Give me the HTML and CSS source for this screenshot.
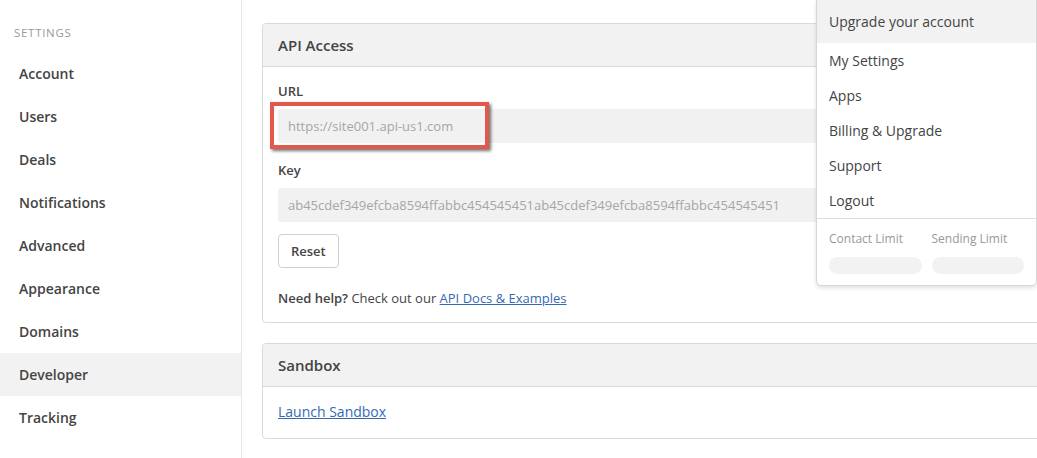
FILE: index.html
```html
<!DOCTYPE html>
<html lang="en">
<head>
    <meta charset="UTF-8">
    <meta name="viewport" content="width=device-width, initial-scale=1.0">
    <title>Developer Settings</title>
    <link rel="stylesheet" href="styles.css">
</head>
<body>
    <div class="page">
        <aside class="sidebar">
            <div class="side-title">Settings</div>
            <nav class="side-nav">
                <a href="#">Account</a>
                <a href="#">Users</a>
                <a href="#">Deals</a>
                <a href="#">Notifications</a>
                <a href="#">Advanced</a>
                <a href="#">Appearance</a>
                <a href="#">Domains</a>
                <a href="#" class="active">Developer</a>
                <a href="#">Tracking</a>
            </nav>
        </aside>

        <main class="main">
            <section class="card">
                <div class="card-header">API Access</div>
                <div class="card-body">
                    <label class="field-label">URL</label>
                    <div class="field">https://site001.api-us1.com</div>
                    <label class="field-label">Key</label>
                    <div class="field">ab45cdef349efcba8594ffabbc454545451ab45cdef349efcba8594ffabbc454545451</div>
                    <button class="btn">Reset</button>
                    <p class="help"><strong>Need help?</strong> Check out our <a href="#">API Docs &amp; Examples</a></p>
                </div>
            </section>

            <section class="card">
                <div class="card-header">Sandbox</div>
                <div class="card-body sandbox-body">
                    <a href="#">Launch Sandbox</a>
                </div>
            </section>
        </main>

        <!-- annotation around the URL field -->
        <div class="highlight"></div>

        <div class="dropdown">
            <div class="dd-item dd-top">Upgrade your account</div>
            <div class="dd-list">
                <a href="#">My Settings</a>
                <a href="#">Apps</a>
                <a href="#">Billing &amp; Upgrade</a>
                <a href="#">Support</a>
                <a href="#">Logout</a>
            </div>
            <div class="limits">
                <div class="limit">
                    <span>Contact Limit</span>
                    <div class="pill"></div>
                </div>
                <div class="limit">
                    <span>Sending Limit</span>
                    <div class="pill"></div>
                </div>
            </div>
        </div>
    </div>
</body>
</html>
```

FILE: styles.css
```css
html, body {
    margin: 0;
    padding: 0;
    overflow: hidden;
}
body {
    font-family: "Open Sans", "Liberation Sans", Arial, sans-serif;
    color: #444;
    background: #fff;
    width: 1037px;
    height: 458px;
}
.page {
    position: relative;
    display: flex;
    height: 458px;
}
.sidebar {
    width: 241px;
    flex-shrink: 0;
    border-right: 1px solid #e6e6e6;
    padding-top: 24px;
}
.side-title {
    font-size: 11.5px;
    line-height: 18px;
    text-transform: uppercase;
    letter-spacing: 0.7px;
    color: #999;
    padding-left: 14px;
    margin-bottom: 10px;
}
.side-nav a {
    display: block;
    height: 43px;
    line-height: 43px;
    padding-left: 19px;
    font-size: 14px;
    font-weight: 600;
    color: #444;
    text-decoration: none;
}
.side-nav a.active {
    background: #f2f2f2;
}
.main {
    flex: 1;
    padding: 23px 0 0 20px;
    min-width: 0;
}
.card {
    border: 1px solid #d9d9d9;
    border-radius: 4px;
    margin-right: -30px;
    margin-bottom: 20px;
    overflow: hidden;
}
.card-header {
    background: #f2f2f2;
    border-bottom: 1px solid #d9d9d9;
    height: 42px;
    line-height: 42px;
    padding-left: 15px;
    font-size: 15px;
    font-weight: 600;
    color: #444;
}
.card-body {
    padding: 15px 15px 15px 15px;
    font-size: 13px;
}
.field-label {
    display: block;
    font-size: 13px;
    font-weight: 600;
    line-height: 18px;
    margin-bottom: 9px;
}
.field {
    height: 34px;
    line-height: 34px;
    background: #f1f1f1;
    border-radius: 3px;
    padding-left: 10px;
    color: #a6a6a6;
    font-size: 13px;
    margin-bottom: 18px;
    white-space: nowrap;
}
.btn {
    display: block;
    margin-top: -6px;
    height: 34px;
    padding: 0 12px;
    background: #fff;
    border: 1px solid #cfcfcf;
    border-radius: 4px;
    font-family: inherit;
    font-size: 13px;
    font-weight: 600;
    color: #444;
}
.help {
    margin: 21px 0 0 0;
    line-height: 18px;
}
.help strong {
    font-weight: 600;
}
.card a {
    color: #356ab3;
    text-decoration: underline;
}
.sandbox-body {
    padding: 16px 15px 17px 15px;
    font-size: 14px;
    line-height: 18px;
}
.highlight {
    position: absolute;
    left: 270px;
    top: 102px;
    width: 211px;
    height: 39px;
    border: 4px solid #e2584a;
    box-shadow: 2px 2px 3px rgba(0, 0, 0, 0.55);
}
.dropdown {
    position: absolute;
    left: 816px;
    top: -1px;
    width: 219px;
    background: #fff;
    border: 1px solid #d6d6d6;
    border-radius: 0 0 5px 5px;
    box-shadow: 0 2px 4px rgba(0, 0, 0, 0.12);
    font-size: 14px;
}
.dd-top {
    background: #f2f2f2;
    height: 43px;
    line-height: 43px;
    padding-left: 12px;
}
.dd-list {
    border-bottom: 1px solid #dcdcdc;
}
.dd-list a {
    display: block;
    height: 35px;
    line-height: 35px;
    padding-left: 12px;
    color: #444;
    text-decoration: none;
}
.limits {
    display: flex;
    gap: 10px;
    padding: 12px 12px 11px 12px;
}
.limit {
    flex: 1;
}
.limit span {
    display: block;
    font-size: 12px;
    line-height: 16px;
    color: #999;
    margin-bottom: 10px;
}
.pill {
    height: 17px;
    border-radius: 9px;
    background: #f2f2f2;
}
```
